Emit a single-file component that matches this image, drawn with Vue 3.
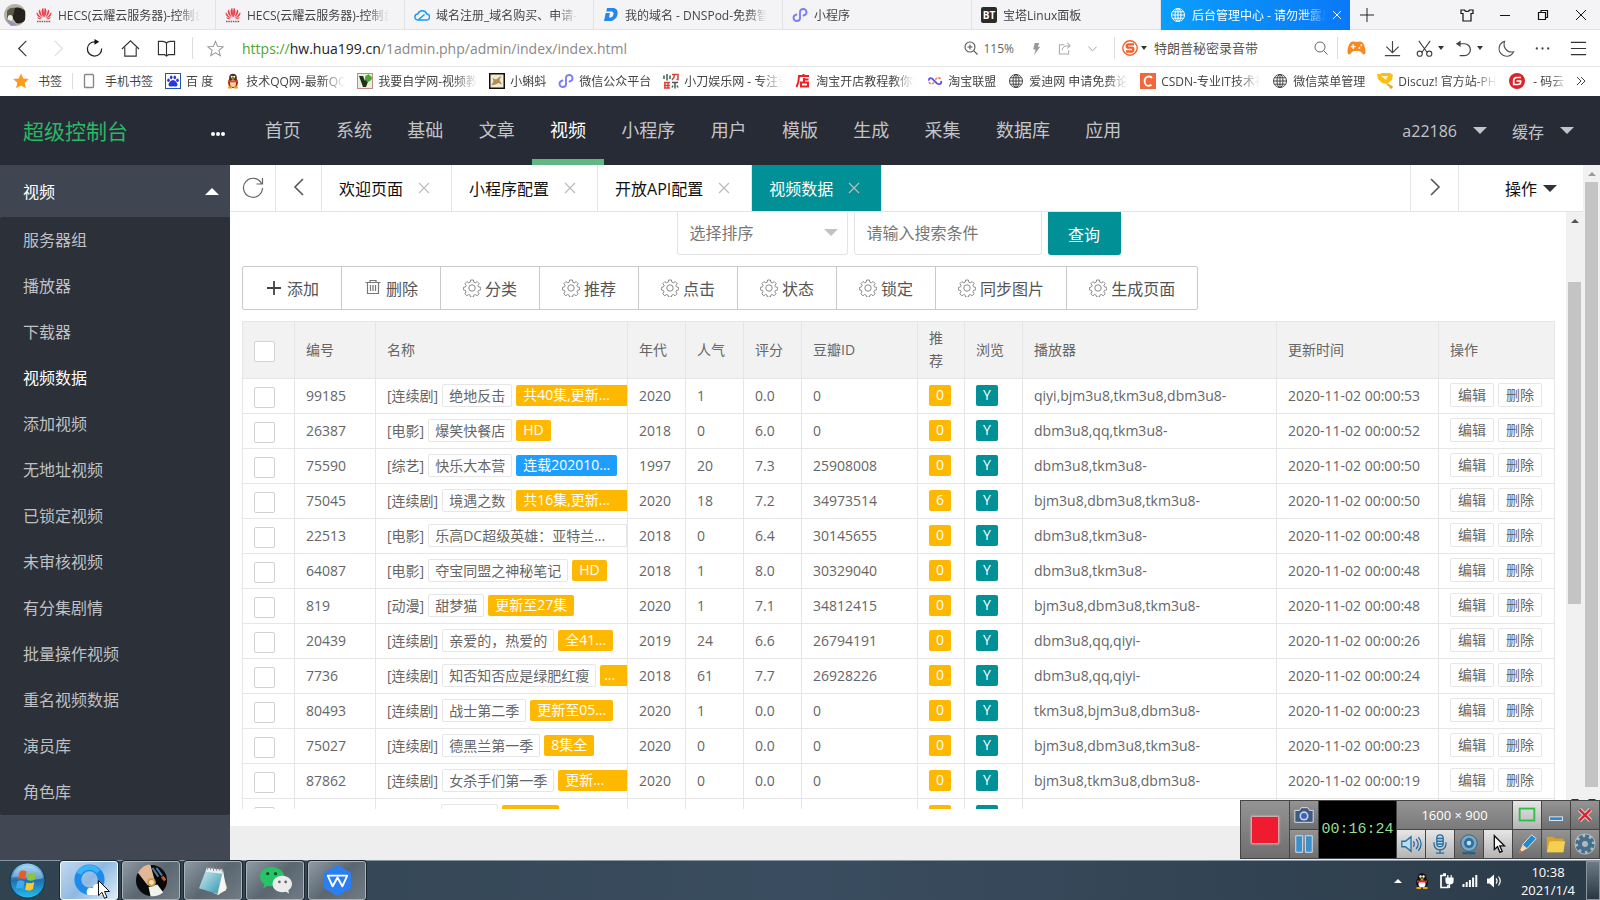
<script setup>
import { ref } from 'vue'

const browserTabs = [
  { icon: 'huawei', title: 'HECS(云耀云服务器)-控制台' },
  { icon: 'huawei', title: 'HECS(云耀云服务器)-控制台' },
  { icon: 'cloud', title: '域名注册_域名购买、申请-腾讯' },
  { icon: 'dnspod', title: '我的域名 - DNSPod-免费智能' },
  { icon: 'mini', title: '小程序' },
  { icon: 'bt', title: '宝塔Linux面板' },
  { icon: 'globe', title: '后台管理中心 - 请勿泄露后', active: true }
]

const bookmarks = [
  { icon: 'baidu', title: '百 度' },
  { icon: 'penguin', title: '技术QQ网-最新QQ技' },
  { icon: 'vgreen', title: '我要自学网-视频教程' },
  { icon: 'ant', title: '小蝌蚪' },
  { icon: 'mini', title: '微信公众平台' },
  { icon: 'knife', title: '小刀娱乐网 - 专注资' },
  { icon: 'shop', title: '淘宝开店教程教你如' },
  { icon: 'union', title: '淘宝联盟' },
  { icon: 'globe', title: '爱迪网 申请免费论坛' },
  { icon: 'csdn', title: 'CSDN-专业IT技术社' },
  { icon: 'globe', title: '微信菜单管理' },
  { icon: 'cup', title: 'Discuz! 官方站-PHP' },
  { icon: 'gitee', title: ' - 码云', short: true }
]

const navs = ['首页', '系统', '基础', '文章', '视频', '小程序', '用户', '模版', '生成', '采集', '数据库', '应用']
const sideItems = ['服务器组', '播放器', '下载器', '视频数据', '添加视频', '无地址视频', '已锁定视频', '未审核视频', '有分集剧情', '批量操作视频', '重名视频数据', '演员库', '角色库']
const pageTabs = ['欢迎页面', '小程序配置', '开放API配置', '视频数据']
const tools = [
  { icon: 'plus', label: '添加' },
  { icon: 'trash', label: '删除' },
  { icon: 'gear', label: '分类' },
  { icon: 'gear', label: '推荐' },
  { icon: 'gear', label: '点击' },
  { icon: 'gear', label: '状态' },
  { icon: 'gear', label: '锁定' },
  { icon: 'gear', label: '同步图片' },
  { icon: 'gear', label: '生成页面' }
]
const columns = [
  { name: '编号', cls: 'c-id' },
  { name: '名称', cls: 'c-name' },
  { name: '年代', cls: 'c-num' },
  { name: '人气', cls: 'c-num' },
  { name: '评分', cls: 'c-num' },
  { name: '豆瓣ID', cls: 'c-act' },
  { name: '推荐', cls: 'c-rec' },
  { name: '浏览', cls: 'c-num' },
  { name: '播放器', cls: 'c-player' },
  { name: '更新时间', cls: 'c-time' },
  { name: '操作', cls: 'c-act' }
]
const rows = [
  { id: '99185', type: '连续剧', name: '绝地反击', note: '共40集,更新...', fill: true, year: '2020', hits: '1', score: '0.0', douban: '0', level: '0', player: 'qiyi,bjm3u8,tkm3u8,dbm3u8-', time: '2020-11-02 00:00:53' },
  { id: '26387', type: '电影', name: '爆笑快餐店', note: 'HD', year: '2018', hits: '0', score: '6.0', douban: '0', level: '0', player: 'dbm3u8,qq,tkm3u8-', time: '2020-11-02 00:00:52' },
  { id: '75590', type: '综艺', name: '快乐大本营', note: '连载202010...', blue: true, year: '1997', hits: '20', score: '7.3', douban: '25908008', level: '0', player: 'dbm3u8,tkm3u8-', time: '2020-11-02 00:00:50' },
  { id: '75045', type: '连续剧', name: '境遇之数', note: '共16集,更新...', fill: true, year: '2020', hits: '18', score: '7.2', douban: '34973514', level: '6', player: 'bjm3u8,dbm3u8,tkm3u8-', time: '2020-11-02 00:00:50' },
  { id: '22513', type: '电影', name: '乐高DC超级英雄：亚特兰...', year: '2018', hits: '0', score: '6.4', douban: '30145655', level: '0', player: 'dbm3u8,tkm3u8-', time: '2020-11-02 00:00:48' },
  { id: '64087', type: '电影', name: '夺宝同盟之神秘笔记', note: 'HD', year: '2018', hits: '1', score: '8.0', douban: '30329040', level: '0', player: 'dbm3u8,tkm3u8-', time: '2020-11-02 00:00:48' },
  { id: '819', type: '动漫', name: '甜梦猫', note: '更新至27集', year: '2020', hits: '1', score: '7.1', douban: '34812415', level: '0', player: 'bjm3u8,dbm3u8,tkm3u8-', time: '2020-11-02 00:00:48' },
  { id: '20439', type: '连续剧', name: '亲爱的，热爱的', note: '全41...', year: '2019', hits: '24', score: '6.6', douban: '26794191', level: '0', player: 'dbm3u8,qq,qiyi-', time: '2020-11-02 00:00:26' },
  { id: '7736', type: '连续剧', name: '知否知否应是绿肥红瘦', note: '...', fill: true, tight: true, year: '2018', hits: '61', score: '7.7', douban: '26928226', level: '0', player: 'dbm3u8,qq,qiyi-', time: '2020-11-02 00:00:24' },
  { id: '80493', type: '连续剧', name: '战士第二季', note: '更新至05...', year: '2020', hits: '1', score: '0.0', douban: '0', level: '0', player: 'tkm3u8,bjm3u8,dbm3u8-', time: '2020-11-02 00:00:23' },
  { id: '75027', type: '连续剧', name: '德黑兰第一季', note: '8集全', year: '2020', hits: '0', score: '0.0', douban: '0', level: '0', player: 'bjm3u8,dbm3u8,tkm3u8-', time: '2020-11-02 00:00:23' },
  { id: '87862', type: '连续剧', name: '女杀手们第一季', note: '更新...', fill: true, year: '2020', hits: '0', score: '0.0', douban: '0', level: '0', player: 'bjm3u8,tkm3u8,dbm3u8-', time: '2020-11-02 00:00:19' }
]
const tasks = ['qqbrowser', 'photo', 'notepad', 'wechat', 'wps']

const checkedAll = ref(false)
const checked = ref([])
</script>

<template>
  <div class="screen">
    <svg class="sprite" aria-hidden="true">
      <defs>
        <linearGradient id="gTask" x1="0" y1="0" x2="0" y2="1"><stop offset="0" stop-color="#9ad4f5" /><stop offset=".5" stop-color="#1d6fae" /><stop offset="1" stop-color="#26c0f0" /></linearGradient>
        <linearGradient id="gNote" x1="0" y1="0" x2="1" y2="1"><stop offset="0" stop-color="#d8f1f6" /><stop offset="1" stop-color="#2f93ae" /></linearGradient>
      </defs>
      <symbol id="huawei" viewBox="0 0 16 16">
        <g fill="#e8404a"><path d="M7.7 10.6C5.600 7.500 4.800 4 6.300 1.400L7.300 1C8 4 8.100 7.500 7.700 10.600zM8.300 10.600C10.400 7.500 11.200 4 9.700 1.400L8.700 1C8 4 7.900 7.500 8.300 10.600z" /><path d="M7 10.800C4.200 9 2.200 6.300 2.800 3.600L4 2.500C4.600 5.500 5.600 8.500 7 10.800zM9 10.800C11.800 9 13.800 6.300 13.200 3.600L12 2.500C11.400 5.500 10.400 8.500 9 10.800z" /><path d="M6.500 11.300C3.500 11 .8 9 .5 6.300L.9 5.300C2.500 7.800 4.300 9.900 6.500 11.300zM9.500 11.300C12.500 11 15.200 9 15.500 6.300L15.100 5.300C13.500 7.800 11.700 9.900 9.500 11.300zM5.900 12C3.800 12.800 1.900 12 1.200 10zM10.100 12C12.200 12.800 14.100 12 14.800 10z" /></g>
        <path d="M1 14.500h14" stroke="#8a5a5c" stroke-width="1.500" stroke-dasharray="1.500 .8" />
      </symbol>
      <symbol id="cloud" viewBox="0 0 16 16"><path d="M4 13h8.500a3 3 0 0 0 .3-6A4.800 4.800 0 0 0 3.800 7 3 3 0 0 0 4 13L10.500 7.500" fill="none" stroke="#1b9cf0" stroke-width="1.500" /></symbol>
      <symbol id="dnspod" viewBox="0 0 16 16"><path d="M4 1h5.500c4 0 5.800 2.500 5 6.500S10.500 14 7 14H1l1.700-8H7L6 10.500h1.200c1.800 0 2.800-1 3.200-3s-.3-3-2-3H3.300z" fill="#2487ee" /></symbol>
      <symbol id="mini" viewBox="0 0 16 16"><path d="M4.500 7.500C2.600 8 1.500 9.200 1.500 10.800c0 1.700 1.400 3.200 3.200 3.200C6.600 14 8 12.800 8 11V5c0-1.800 1.400-3 3.300-3 1.800 0 3.200 1.500 3.200 3.200 0 1.600-1.100 2.800-3 3.300" fill="none" stroke="#7b7ff0" stroke-width="1.900" stroke-linecap="round" /></symbol>
      <symbol id="globe" viewBox="0 0 16 16"><g fill="none" stroke="currentColor"><circle cx="8" cy="8" r="6.500" /><ellipse cx="8" cy="8" rx="3" ry="6.500" /><path d="M8 1.500v13M1.500 8h13M2.500 4.800h11M2.500 11.200h11" /></g></symbol>
      <symbol id="baidu" viewBox="0 0 16 16"><rect x=".5" y=".5" width="15" height="15" fill="#fff" stroke="#1d5aa8" /><g fill="#2a38d8"><ellipse cx="6.200" cy="4.300" rx="1.300" ry="1.900" /><ellipse cx="9.800" cy="4.300" rx="1.300" ry="1.900" /><ellipse cx="3.500" cy="7.300" rx="1.300" ry="1.700" /><ellipse cx="12.500" cy="7.300" rx="1.300" ry="1.700" /><path d="M8 7c2 0 4.500 3 4.500 4.800S10.500 14 8 13.200C5.500 14 3.500 13.600 3.500 11.800S6 7 8 7z" /></g></symbol>
      <symbol id="penguin" viewBox="0 0 16 16"><ellipse cx="8" cy="9.500" rx="5" ry="5.500" fill="#a33018" /><circle cx="8" cy="4.500" r="3.800" fill="#473027" /><ellipse cx="8" cy="10.500" rx="3" ry="3.600" fill="#f4d5a8" /><path d="M4 7.500h8v1.800H4z" fill="#e8421c" /><path d="M6 5.500h4L8 7z" fill="#f7a61b" /><circle cx="6.800" cy="3.800" r="1" fill="#fff" /><circle cx="9.200" cy="3.800" r="1" fill="#fff" /><path d="M3 14.500h4M9 14.500h4" stroke="#f2a018" stroke-width="2" /></symbol>
      <symbol id="vgreen" viewBox="0 0 16 16"><rect x=".5" y=".5" width="15" height="15" fill="#e9efdf" stroke="#c28a86" /><path d="M2 3h4l2 5 1-3 3 1-3 8H6z" fill="#1f2f1c" /><path d="M8 5c0-3 3-3 4-4 0 2 3 2 3 4s-3 4-5 4z" fill="#4ea72d" /></symbol>
      <symbol id="ant" viewBox="0 0 16 16"><rect x=".75" y=".75" width="14.500" height="14.500" fill="#f3ead4" stroke="#111" stroke-width="1.500" /><path d="M2.500 12.500l2-4.500-1-3 3.500 1.500 5.500-4-2 4.500 2.500 4.500-3.500-1.500-3 1.500z" fill="#b08f52" /></symbol>
      <symbol id="knife" viewBox="0 0 16 16"><path d="M1 2.500v3.500M4 1v6.500M7 2.500v3.500M9 9.500h6M12 9.500v6M10 12.500l-1 2M14 12.500l1 2" stroke="#3d5f52" stroke-width="1.500" fill="none" /><path d="M9 1.500h6v5h-1.500M11.500 1.500c0 3-1 4-2.500 5.500M1 9.500h6M2 9v6.500M5 9v6.500M1 12.500h6M1 15h6" stroke="#d94437" stroke-width="1.500" fill="none" /></symbol>
      <symbol id="shop" viewBox="0 0 16 16"><path d="M3 3h11M8.500 1v2M4 3c0 5-1 8-2.500 11M9 5v4M9 6.500h4.500M6 9.500h7v4H6z" stroke="#e22" stroke-width="2" fill="none" /></symbol>
      <symbol id="union" viewBox="0 0 16 16"><path d="M2.500 7.500C1 6 3 4.500 5 5.500l5 5c2.500 1.500 5 0 4-2.500" fill="none" stroke="#6253e8" stroke-width="1.800" /><path d="M13.500 6C12 4 9.500 5 8 7M2 9c1 2.500 3.500 2 5 .5" fill="none" stroke="#f07a5a" stroke-width="1.600" stroke-dasharray="2.500 1" /></symbol>
      <symbol id="csdn" viewBox="0 0 16 16"><rect width="16" height="16" fill="#f0683c" /><path d="M12 5C11 3.500 9.500 3.200 8 3.600 5.800 4.200 4.400 6.500 4.700 9s2.300 4 4.300 3.800c1-.1 1.900-.5 2.500-1" fill="none" stroke="#fff" stroke-width="1.900" /></symbol>
      <symbol id="cup" viewBox="0 0 16 16"><path d="M0 1h3l2-1h8l3 2-1 5-5 4-5-1-4-4z" fill="#fbbd17" /><path d="M4 3h7l-2 4z" fill="#fff3c0" /><path d="M10 11l3 2" stroke="#f0a814" stroke-width="2" /><circle cx="14" cy="14" r="1.800" fill="#f0a814" /></symbol>
      <symbol id="gitee" viewBox="0 0 16 16"><circle cx="8" cy="8" r="8" fill="#d8242a" /><path d="M12 4.500H7.500A2.800 2.800 0 0 0 4.700 7.300v4.200h4.500a2.400 2.400 0 0 0 2.400-2.400V8H7.500" fill="none" stroke="#fff" stroke-width="1.700" /></symbol>
      <symbol id="plus" viewBox="0 0 18 18"><path d="M9 2v14M2 9h14" stroke="#444" stroke-width="1.800" /></symbol>
      <symbol id="trash" viewBox="0 0 18 18"><g fill="none" stroke="#777"><path d="M1.500 3.500h15M6 3V1.500h6V3M3.500 4v10.500h11V4M6.500 6v6M9 6v6M11.500 6v6" stroke-width="1.200" /></g></symbol>
      <symbol id="gear" viewBox="0 0 18 18"><g fill="none" stroke="#8a8a8a"><circle cx="9" cy="9" r="3.200" /><path d="M7.600 1h2.800l.4 2.200 1.500.6 1.900-1.200 2 2-1.300 1.800.6 1.500 2.200.5v2.500l-2.200.5-.6 1.500 1.200 1.900-2 2-1.800-1.300-1.500.7-.4 1.900H7.600l-.5-1.900-1.500-.7-1.800 1.300-2-2 1.200-1.900-.6-1.500L.4 10.900V8.400l2.100-.5.6-1.500L1.900 4.600l2-2 1.800 1.200 1.500-.6z" /></g></symbol>
      <symbol id="qqbrowser" viewBox="0 0 34 34"><circle cx="17" cy="16" r="12" fill="none" stroke="#1d8bea" stroke-width="7" /><path d="M6 10a12 12 0 0 1 20-2" fill="none" stroke="#39b4f8" stroke-width="5" /><path d="M15 32c-3-6 2-9 5-7 2-7 10-5 10 0 5 1 4 7 0 7z" fill="#fff" /></symbol>
      <symbol id="photo" viewBox="0 0 34 34"><circle cx="17" cy="17" r="16" fill="#08090b" /><path d="M3 9C7 2 13 0 16 1l4 15-7 6z" fill="#e3b796" /><path d="M14 24l9-3 6 8c-3 3-9 5-13 4z" fill="#f2f2ee" /><circle cx="17" cy="19" r="4.500" fill="#c99b4a" /><circle cx="17" cy="19" r="2.500" fill="#f1e2b8" /><path d="M18 4l6 9M22 4l6 8" stroke="#4b7c9c" stroke-width="2" /><path d="M28 13l3 4" stroke="#d2572d" stroke-width="3" /></symbol>
      <symbol id="notepad" viewBox="0 0 34 34"><path d="M25 5l6 20-9 7-5-2z" fill="#eae6cf" /><path d="M10 4l17 2-6 25L2 25z" fill="url(#gNote)" /><path d="M10 4l17 2-1 4L9 8z" fill="#e8eef0" /><path d="M27 7l3 20-8 4z" fill="#f7f7f2" /><path d="M11 2v4M14 2v4M17 3v4M20 3v4M23 3v4M26 4v4" stroke="#888" /></symbol>
      <symbol id="wechat" viewBox="0 0 34 34"><path d="M13 3C6 3 1 7.500 1 13c0 3.500 2 6 4.500 7.800L4.500 25l4.500-2.500c8 2 17-1.500 17-9.500C26 7.500 20 3 13 3z" fill="#27c467" /><circle cx="9" cy="10" r="1.700" fill="#15502e" /><circle cx="17" cy="10" r="1.700" fill="#15502e" /><path d="M24 12c-6 0-10 4-10 8.500S18 29 24 29c1.300 0 2.500-.2 3.600-.5L31 30.500l-.8-3.500c2.400-1.600 3.800-3.800 3.800-6.500C34 16 30 12 24 12z" fill="#ececec" /><circle cx="21" cy="18.500" r="1.400" fill="#666" /><circle cx="27.500" cy="18.500" r="1.400" fill="#666" /></symbol>
      <symbol id="wps" viewBox="0 0 34 34"><path d="M17 1l14 8v16l-14 8-14-8V9z" fill="#2b7ff0" /><path d="M7 12h20l-5 11-5-9-5 9z" fill="none" stroke="#fff" stroke-width="2" stroke-linejoin="round" /></symbol>
    </svg>

    <header class="chrome">
      <div class="tabstrip">
        <svg class="avatar" viewBox="0 0 22 22" role="img" aria-label="头像"><circle cx="11" cy="11" r="11" fill="#b5b3a6" /><path d="M9 5c4-3 9-1 12 2v9c-2 3-6 4-9 3l-4-6z" fill="#25221e" /><path d="M3 7c2-3 5-4 8-3l-2 8-6 2z" fill="#5d5b4e" /><path d="M4 12c2-2 4-1 5 1l-1 4-4-1z" fill="#f0eee8" /><path d="M1 14l6 3 6 4-6 1z" fill="#9990b3" /></svg>
        <a v-for="(t, i) in browserTabs" :key="i" href="#" class="btab" :class="{ active: t.active }">
          <span v-if="t.icon === 'bt'" class="btlogo">BT</span>
          <svg v-else class="i16"><use :href="'#' + t.icon" /></svg>
          <span class="fade">{{ t.title }}</span>
          <svg v-if="t.active" class="i10" viewBox="0 0 10 10"><path d="M1 1l8 8M9 1L1 9" stroke="#fff" /></svg>
        </a>
        <button class="newtab" aria-label="新标签页"><svg viewBox="0 0 14 14"><path d="M7 0v14M0 7h14" stroke="#222" /></svg></button>
        <span class="grow"></span>
        <button class="win" aria-label="皮肤"><svg viewBox="0 0 14 14"><path d="M1 2h3.500c.5 2 4.500 2 5 0H13v3.500h-2V13H3V5.500H1z" fill="none" stroke="#111" stroke-width="1.200" /></svg></button>
        <button class="win" aria-label="最小化"><svg viewBox="0 0 14 14"><path d="M2 7.500h10" stroke="#111" /></svg></button>
        <button class="win" aria-label="还原"><svg viewBox="0 0 14 14"><path d="M2.500 4.500h7v7h-7zM5 4V2.500h6.500v7H10" fill="none" stroke="#111" stroke-width="1.200" /></svg></button>
        <button class="win" aria-label="关闭"><svg viewBox="0 0 14 14"><path d="M2 2l10 10M12 2L2 12" stroke="#111" /></svg></button>
      </div>

      <div class="navbar">
        <button class="nb" aria-label="后退"><svg viewBox="0 0 20 20"><path d="M14 2L6 10l8 8" fill="none" stroke="#333" stroke-width="1.200" /></svg></button>
        <button class="nb" aria-label="前进"><svg viewBox="0 0 20 20"><path d="M6 2l8 8-8 8" fill="none" stroke="#ddd" stroke-width="1.200" /></svg></button>
        <button class="nb" aria-label="刷新"><svg viewBox="0 0 20 20"><path d="M11 3A7.500 7.500 0 1 0 17.500 10" fill="none" stroke="#222" stroke-width="1.300" /><path d="M10 0l5 3-5 3z" fill="#111" /></svg></button>
        <button class="nb" aria-label="主页"><svg viewBox="0 0 20 20"><path d="M1 10.500L10 2l9 8.500M4 9v9h12V9" fill="none" stroke="#333" stroke-width="1.200" /></svg></button>
        <button class="nb" aria-label="阅读"><svg viewBox="0 0 20 20"><path d="M10 4.500C9 3 8 2.500 6 2.500H1.500v14H8l2 1.500 2-1.500h6.500v-14H14c-2 0-3 .5-4 2V17" fill="none" stroke="#333" stroke-width="1.200" /></svg></button>
        <i class="vsep"></i>
        <button class="nb star" aria-label="收藏"><svg viewBox="0 0 20 20"><path d="M10 2.500l2.200 5.200 5.800.5-4.400 3.700 1.400 5.600-5-3-5 3 1.400-5.600L2 8.200l5.800-.5z" fill="none" stroke="#999" stroke-width="1.100" /></svg></button>
        <div class="url" role="textbox" aria-label="网址" contenteditable="true"><span class="scheme">https://</span><span class="host">hw.hua199.cn</span>/1admin.php/admin/index/index.html</div>
        <div class="pageinfo">
          <svg class="i14" viewBox="0 0 14 14"><g fill="none" stroke="#555" stroke-width="1.100"><circle cx="6" cy="6" r="5" /><path d="M3.500 6h5M6 3.500v5M9.700 9.700L13.500 13.500" /></g></svg>
          <span>115%</span>
        </div>
        <button class="sm" aria-label="极速"><svg viewBox="0 0 14 14"><path d="M5 1h5L8.500 5H11L4.500 14 6 8H3.500z" fill="#999" /></svg></button>
        <button class="sm" aria-label="分享"><svg viewBox="0 0 14 14"><path d="M7 3H1.500v10h10V9M4.500 9c0-4 3-5 7.500-5M10 1l3 3-3 3" fill="none" stroke="#aaa" stroke-width="1.100" /></svg></button>
        <button class="sm" aria-label="更多"><svg viewBox="0 0 14 14"><path d="M2.500 5L7 9.500 11.500 5" fill="none" stroke="#999" /></svg></button>
        <i class="vsep"></i>
        <label class="search">
          <svg class="i16" viewBox="0 0 16 16"><circle cx="8" cy="8" r="7.200" fill="none" stroke="#f0602c" stroke-width="1.400" /><path d="M12 4.300H6.300c-2 0-2 3.300 0 3.300h3.400c2.200 0 2.200 3.900 0 3.900H4" fill="none" stroke="#f0602c" stroke-width="2.300" /></svg>
          <i class="tri"></i>
          <input type="text" aria-label="搜索" placeholder="特朗普秘密录音带" />
          <svg class="i14" viewBox="0 0 14 14"><circle cx="6" cy="6" r="5" fill="none" stroke="#666" /><path d="M9.500 9.500L13.500 13.500" stroke="#666" /></svg>
        </label>
        <i class="vsep"></i>
        <button class="nb" aria-label="游戏"><svg viewBox="0 0 20 20"><path d="M5 3c2-1 3 0 5 0s3-1 5 0c3 1 4.500 7 4.500 11 0 3-3 3-4.500 0-1-2-9-2-10 0C3.500 17 .5 17 .5 14 .5 10 2 4 5 3z" fill="#f58a24" /><path d="M4 8h5M6.500 5.500v5" stroke="#fff" stroke-width="1.400" /><circle cx="13" cy="9.500" r="1" fill="#fff" /><circle cx="15" cy="6.500" r="1" fill="#fff" /></svg></button>
        <button class="nb" aria-label="下载"><svg viewBox="0 0 20 20"><path d="M10 2v12M3.500 8L10 14.300 16.500 8M2 17.500h16" fill="none" stroke="#444" stroke-width="1.200" /></svg></button>
        <button class="nb pair" aria-label="截图"><svg viewBox="0 0 20 20"><g fill="none" stroke="#444" stroke-width="1.200"><path d="M4 2l9 12.500M16 2L7 14.500" /><circle cx="5" cy="15.500" r="2.700" /><circle cx="15" cy="15.500" r="2.700" /></g></svg><i class="tri"></i></button>
        <button class="nb pair" aria-label="恢复"><svg viewBox="0 0 20 20"><path d="M3 5h8a6 6 0 0 1 0 12.500H6" fill="none" stroke="#444" stroke-width="1.300" /><path d="M7 1.500V8.500L2 5z" fill="#444" /></svg><i class="tri"></i></button>
        <button class="nb" aria-label="夜间"><svg viewBox="0 0 20 20"><path d="M8 2.500C6 8 10 15 17.500 13.500A8 8 0 1 1 8 2.500z" fill="none" stroke="#555" stroke-width="1.200" /></svg></button>
        <button class="nb" aria-label="更多工具"><svg viewBox="0 0 20 20"><g fill="#444"><circle cx="4" cy="10" r="1.200" /><circle cx="10" cy="10" r="1.200" /><circle cx="16" cy="10" r="1.200" /></g></svg></button>
        <button class="nb" aria-label="菜单"><svg viewBox="0 0 20 20"><path d="M2 3.500h16M2 10h16M2 16.500h16" stroke="#333" stroke-width="1.200" /></svg></button>
      </div>

      <nav class="bookmarks" aria-label="书签">
        <a href="#" class="fav"><svg class="i16" viewBox="0 0 16 16"><path d="M8 .5l2.300 5 5.500.6-4.100 3.700 1.200 5.500L8 12.500l-4.900 2.800 1.200-5.500L.2 6.100l5.500-.6z" fill="#ff9a1f" /></svg>书签</a>
        <i class="vsep"></i>
        <a href="#" class="mobile"><svg class="i16" viewBox="0 0 16 16"><rect x="3.500" y="1.500" width="9" height="13" rx="1" fill="none" stroke="#888" stroke-width="1.400" /></svg>手机书签</a>
        <a v-for="(b, i) in bookmarks" :key="i" href="#"><svg class="i16"><use :href="'#' + b.icon" /></svg><span class="fade" :class="{ short: b.short }">{{ b.title }}</span></a>
        <button class="more" aria-label="更多书签"><svg viewBox="0 0 10 10"><path d="M1 1l4 4-4 4M5 1l4 4-4 4" fill="none" stroke="#444" /></svg></button>
      </nav>
    </header>

    <header class="top">
      <div class="brand"><a href="#">超级控制台</a><button aria-label="折叠菜单"><i></i><i></i><i></i></button></div>
      <nav><a v-for="n in navs" :key="n" href="#" :class="{ on: n === '视频' }">{{ n }}</a></nav>
      <div class="user">
        <button>a22186<i class="arrow"></i></button>
        <button>缓存<i class="arrow"></i></button>
      </div>
    </header>

    <div class="body">
      <aside>
        <button class="group">视频<i class="arrow up"></i></button>
        <ul><li v-for="s in sideItems" :key="s"><a href="#" :class="{ on: s === '视频数据' }">{{ s }}</a></li></ul>
      </aside>

      <main>
        <div class="frame">
          <div class="pane">
            <div class="ptabs">
              <button class="sq" aria-label="刷新页面"><svg viewBox="0 0 22 22"><path d="M19.500 7.500A9.500 9.500 0 1 0 20.500 12M20.500 2v6h-6" fill="none" stroke="#666" stroke-width="1.200" /></svg></button>
              <button class="sq" aria-label="向左"><svg viewBox="0 0 22 22"><path d="M15 3L7 11l8 8" fill="none" stroke="#555" stroke-width="1.600" /></svg></button>
              <a v-for="p in pageTabs" :key="p" href="#" :class="{ on: p === '视频数据' }">{{ p }}<svg class="x" viewBox="0 0 12 12"><path d="M1 1l10 10M11 1L1 11" stroke="currentColor" stroke-width="1.200" /></svg></a>
              <span class="grow"></span>
              <button class="sq right" aria-label="向右"><svg viewBox="0 0 22 22"><path d="M7 3l8 8-8 8" fill="none" stroke="#555" stroke-width="1.600" /></svg></button>
              <button class="ops">操作<i class="arrow"></i></button>
            </div>

            <div class="inner">
              <div class="content">
                <form class="query" @submit.prevent>
                  <span class="sel"><select aria-label="选择排序"><option>选择排序</option></select><i class="arrow"></i></span>
                  <input type="text" aria-label="搜索条件" placeholder="请输入搜索条件" />
                  <button>查询</button>
                </form>
                <div class="tools"><button v-for="t in tools" :key="t.label"><svg><use :href="'#' + t.icon" /></svg>{{ t.label }}</button></div>
                <table>
                  <thead>
                    <tr>
                      <th class="c-check"><input v-model="checkedAll" type="checkbox" aria-label="全选" /></th>
                      <th v-for="c in columns" :key="c.name" :class="c.cls">{{ c.name }}</th>
                    </tr>
                  </thead>
                  <tbody>
                    <tr v-for="r in rows" :key="r.id">
                      <td><input v-model="checked" type="checkbox" :value="r.id" :aria-label="'选择 ' + r.id" /></td>
                      <td>{{ r.id }}</td>
                      <td class="name"><div><span>[{{ r.type }}]</span><a href="#" class="line" :class="{ fill: !r.note }">{{ r.name }}</a><span v-if="r.note" class="badge" :class="{ fill: r.fill, blue: r.blue, tight: r.tight }">{{ r.note }}</span></div></td>
                      <td>{{ r.year }}</td>
                      <td>{{ r.hits }}</td>
                      <td>{{ r.score }}</td>
                      <td>{{ r.douban }}</td>
                      <td><button class="badge one">{{ r.level }}</button></td>
                      <td><a href="#" class="badge one teal">Y</a></td>
                      <td>{{ r.player }}</td>
                      <td>{{ r.time }}</td>
                      <td><div class="acts"><button>编辑</button><button>删除</button></div></td>
                    </tr>
                    <tr aria-hidden="true">
                      <td><input type="checkbox" tabindex="-1" /></td>
                      <td></td>
                      <td class="name"><div><span class="ph"></span><span class="line ph2"></span><span class="badge ph2"></span></div></td>
                      <td></td><td></td><td></td><td></td>
                      <td><span class="badge one"></span></td>
                      <td><span class="badge one teal"></span></td>
                      <td></td><td></td><td></td>
                    </tr>
                  </tbody>
                </table>
              </div>
              <div class="sbar in"><i class="sa up"></i><i class="thumb"></i><i class="sa down"></i></div>
            </div>
          </div>
          <div class="sbar out"><i class="sa up"></i><i class="thumb"></i><i class="sa down"></i></div>
        </div>
        <div class="gap"></div>
        <footer></footer>
      </main>
    </div>

    <div class="taskbar">
      <button class="orb" aria-label="开始"><svg viewBox="0 0 38 38"><circle cx="19" cy="19" r="18" fill="url(#gTask)" stroke="#0c3552" /><path d="M3 16A16.500 16.500 0 0 1 35 16C25 22 13 12 3 16z" fill="#fff" opacity=".3" /><path d="M11 10c3-2 5-1 7 0l-1.500 8c-2-1-5-2-7.500-.5z" fill="#ee5a24" /><path d="M20 11c3 1 5 1 8-.5L26.500 18c-3 2-5 1-8 .5z" fill="#8cc63e" /><path d="M8.500 20c3-2 5-1 7.500.3L14.500 28c-2-1.200-4.500-2-7.500-.5z" fill="#3fa9f0" /><path d="M18 21c3 1.200 5 1 8-.5L24.500 28c-3 2-5 1.500-8 .5z" fill="#fdc82f" /></svg></button>
      <button v-for="(t, i) in tasks" :key="t" class="task" :class="{ cur: i === 0 }" :aria-label="t"><svg><use :href="'#' + t" /></svg></button>
      <span class="grow"></span>
      <div class="tray">
        <svg viewBox="0 0 16 16" class="i16"><path d="M4 10l4-4 4 4z" fill="#fff" /></svg>
        <svg viewBox="0 0 16 16" class="i16"><ellipse cx="8" cy="9.500" rx="6" ry="5.500" fill="#111" /><circle cx="8" cy="4.500" r="4.300" fill="#111" /><ellipse cx="8" cy="11" rx="3.500" ry="3.500" fill="#fff" /><path d="M3 7.500h10v2H3z" fill="#e02a22" /><path d="M5.500 5.500h5L8 7.200z" fill="#f7a61b" /><circle cx="6.500" cy="3.500" r="1.200" fill="#fff" /><circle cx="9.500" cy="3.500" r="1.200" fill="#fff" /><path d="M2.500 15h4.500M9 15h4.500" stroke="#f2a018" stroke-width="2" /></svg>
        <svg viewBox="0 0 16 16" class="i16"><path d="M8 2.500H3v12h7V12M5 1h3" fill="none" stroke="#fff" stroke-width="1.700" /><path d="M8 5h7v3c0 2-1.500 3-3.500 3S8 10 8 8zM9.800 2v3M13.200 2v3M11.500 11v4" fill="#fff" stroke="#fff" stroke-width="1.200" /></svg>
        <svg viewBox="0 0 16 16" class="i16"><path d="M1.500 14v-3M4.700 14V9M7.900 14V7M11.100 14V4.500M14.300 14V2" stroke="#fff" stroke-width="2" /></svg>
        <svg viewBox="0 0 16 16" class="i16"><path d="M1 5.500h2.500L8 1.500v13l-4.500-4H1z" fill="#fff" /><path d="M10 5.500c1.300 1.500 1.300 3.500 0 5M12.500 3.500c2.300 3 2.300 6 0 9" fill="none" stroke="#fff" stroke-width="1.200" /></svg>
        <div class="clock"><span>10:38</span><span>2021/1/4</span></div>
        <button class="peek" aria-label="显示桌面"></button>
      </div>
      <svg class="cursor" viewBox="0 0 12 19"><path d="M.5.500v15l3.500-3.200 2.500 6 2.500-1-2.500-5.800h5z" fill="#fff" stroke="#111" /></svg>
    </div>

    <div class="recorder">
      <button class="rec" aria-label="停止录制"><i></i></button>
      <button class="cam" aria-label="截屏"><svg viewBox="0 0 24 24"><path d="M2 7h5l2-3h7l2 3h4v13H2z" fill="#3f5a80" stroke="#dfe6f0" /><circle cx="12" cy="13" r="5" fill="#c4d2ec" /><circle cx="12" cy="13" r="3.200" fill="#3b62b8" /></svg></button>
      <button class="pause" aria-label="暂停"><svg viewBox="0 0 24 24"><path d="M3 3h7.500v18H3zM13.500 3H21v18h-7.500z" fill="#3d8fcc" stroke="#d8e6f2" /></svg></button>
      <output class="timer">00:16:24</output>
      <span class="size">1600 × 900</span>
      <button class="lit" aria-label="区域"><svg viewBox="0 0 24 24"><rect x="4" y="5" width="16" height="13" fill="none" stroke="#2cbf45" stroke-width="2" /></svg></button>
      <button aria-label="最小化录制"><svg viewBox="0 0 24 24"><rect x="5" y="14" width="14" height="4" fill="#2f86c8" stroke="#e5eef6" /></svg></button>
      <button aria-label="关闭录制"><svg viewBox="0 0 24 24"><path d="M6 6l12 12M18 6L6 18" stroke="#fff" stroke-width="5" opacity=".6" /><path d="M6 6l12 12M18 6L6 18" stroke="#e01e28" stroke-width="2.500" /></svg></button>
      <button class="lit" aria-label="声音"><svg viewBox="0 0 24 24"><g fill="none" stroke="#2b6c9e" stroke-width="1.400"><path d="M2 9h4l6-5v16l-6-5H2z" fill="#b8dcf4" /><path d="M14.500 9c1.500 2 1.500 4 0 6M17.500 6.500c3 3.500 3 7.500 0 11M20 4.500c4 5 4 10 0 15" /></g></svg></button>
      <button class="lit" aria-label="麦克风"><svg viewBox="0 0 24 24"><g fill="none" stroke="#2b6c9e" stroke-width="1.400"><rect x="8.500" y="2" width="7" height="13" rx="3.500" fill="#b8dcf4" /><path d="M8.500 6h7M8.500 9h7M8.500 12h7M5.500 10v2a6.500 6.500 0 0 0 13 0v-2M12 18.500V22M7.500 22h9" /></g></svg></button>
      <button aria-label="摄像头"><svg viewBox="0 0 24 24"><circle cx="12" cy="11" r="9" fill="#7fa8c4" stroke="#2f5f80" /><circle cx="12" cy="11" r="5.500" fill="#2d6f9e" /><circle cx="12" cy="11" r="2.500" fill="#bfe0f4" /><path d="M5 22h14" stroke="#2f5f80" stroke-width="2.500" /></svg></button>
      <button class="lit" aria-label="指针"><svg viewBox="0 0 24 24"><path d="M8 3v15l3.500-3 2.500 6 2.500-1-2.500-6H19z" fill="#fff" stroke="#111" stroke-width="1.500" /></svg></button>
      <button aria-label="画笔"><svg viewBox="0 0 24 24"><path d="M7 13L17 2l5 4L12 17z" fill="#2589cc" stroke="#dcecf6" /><path d="M7 13l5 4-9 5z" fill="#f4d8b0" /><path d="M3 22l1.500-3.500 2 2z" fill="#d65030" /></svg></button>
      <button aria-label="文件夹"><svg viewBox="0 0 24 24"><path d="M2 4h7l2 2h9v15H2z" fill="#d9a520" /><path d="M5 9h17l-2 12H2z" fill="#f5cf52" /></svg></button>
      <button aria-label="设置"><svg viewBox="0 0 24 24"><circle cx="12" cy="12" r="11.500" fill="#c6d2da" opacity=".7" /><circle cx="12" cy="12" r="8.500" fill="none" stroke="#456f8c" stroke-width="4" stroke-dasharray="4 2.670" /><circle cx="12" cy="12" r="5.500" fill="none" stroke="#456f8c" stroke-width="4.500" /></svg></button>
    </div>
  </div>
</template>

<style>
html, body { margin: 0; }
</style>

<style scoped>
.screen {
  position: relative;
  display: flex;
  flex-direction: column;
  height: 100vh;
  overflow: hidden;
  font-family: "Open Sans", "Noto Sans CJK SC", sans-serif;
  font-size: 14px;
  color: #666;
  background: #fff;
}
.screen *, .screen *::before { box-sizing: border-box; }
button, input, select { font: inherit; color: inherit; background: none; border: 0; padding: 0; margin: 0; outline: 0; }
a { color: inherit; text-decoration: none; }
ul { list-style: none; margin: 0; padding: 0; }
svg { display: block; flex: none; }
.sprite { position: absolute; width: 0; height: 0; }
.grow { flex: 1; }
.i16 { width: 16px; height: 16px; }
.i14 { width: 14px; height: 14px; }
.i10 { width: 10px; height: 10px; }
.vsep { flex: none; width: 1px; height: 22px; background: #ddd; }
.tri { flex: none; border: 3px solid transparent; border-top: 4px solid #333; border-bottom: 0; }
.arrow { flex: none; border: 7px solid transparent; border-top-color: currentColor; border-bottom: 0; }
.arrow.up { border-top: 0; border-bottom: 7px solid currentColor; }
.fade {
  overflow: hidden;
  white-space: pre;
  -webkit-mask-image: linear-gradient(to right, #000 120px, transparent 142px);
  mask-image: linear-gradient(to right, #000 120px, transparent 142px);
}

/* browser window */
.chrome { flex: none; font-size: 12px; color: #444; }
.tabstrip { display: flex; height: 30px; background: #f4f4f6; border-bottom: 1px solid #e2e2e4; }
.avatar { width: 22px; height: 22px; margin: 4px 1px 0 4px; }
.btab { flex: 0 1 189px; min-width: 0; display: flex; align-items: center; gap: 6px; padding: 0 8px 0 9px; border-right: 1px solid #e2e2e4; }
.btab .fade { flex: 0 1 142px; }
.btab.active { color: #fff; background: linear-gradient(to right, #0a9ffc, #0a78f8); border: 0; height: 30px; }
.btab.active .fade { flex-basis: 134px; -webkit-mask-image: linear-gradient(to right, #000 112px, transparent 134px); mask-image: linear-gradient(to right, #000 112px, transparent 134px); }
.btlogo { flex: none; width: 16px; height: 16px; border-radius: 2px; background: #2b2b2b; color: #fff; font-size: 10px; font-weight: 700; line-height: 16px; text-align: center; }
.newtab { width: 34px; display: grid; place-items: center; }
.newtab svg, .win svg { width: 14px; height: 14px; }
.win { width: 38px; display: grid; place-items: center; }
.navbar { display: flex; align-items: center; height: 37px; padding: 0 4px; border-bottom: 1px solid #e6e6e6; }
.nb { flex: none; width: 36px; height: 30px; display: flex; align-items: center; justify-content: center; }
.nb svg { width: 19px; height: 19px; }
.nb.pair { width: 39px; gap: 4px; }
.nb + .vsep { margin-left: 8px; }
.star { width: 44px; }
.url { flex: 1; min-width: 0; margin-left: 5px; font-size: 14px; color: #888; white-space: nowrap; outline: 0; }
.scheme { color: #4da62d; }
.host { color: #222; }
.pageinfo { display: flex; align-items: center; gap: 5px; margin-right: 8px; color: #666; }
.sm { width: 28px; height: 28px; display: grid; place-items: center; }
.sm svg { width: 13px; height: 13px; }
.sm + .vsep { margin-left: 8px; }
.search { display: flex; align-items: center; width: 222px; padding: 0 9px 0 7px; gap: 3px; }
.search input { flex: 1; min-width: 0; margin-left: 4px; font-size: 13px; }
.search input::placeholder { color: #555; opacity: 1; }
.bookmarks { display: flex; align-items: center; gap: 12px; height: 29px; padding: 0 14px 2px 13px; overflow: hidden; }
.bookmarks a { flex: none; display: flex; align-items: center; gap: 5px; white-space: pre; }
.bookmarks .fav { gap: 9px; margin-right: -2px; }
.bookmarks .mobile { gap: 8px; margin-left: -4px; }
.bookmarks .vsep { height: 16px; }
.bookmarks .fade { max-width: 99px; -webkit-mask-image: linear-gradient(to right, #000 76px, transparent 99px); mask-image: linear-gradient(to right, #000 76px, transparent 99px); }
.bookmarks .fade.short { max-width: 37px; -webkit-mask-image: linear-gradient(to right, #000 20px, transparent 37px); mask-image: linear-gradient(to right, #000 20px, transparent 37px); }
.more { margin-left: auto; width: 10px; flex: none; }
.more svg { width: 10px; height: 10px; }

/* admin header */
.top { flex: none; display: flex; height: 69px; background: #272b35; color: #c3c4c7; }
.brand { flex: none; width: 247px; display: flex; align-items: center; justify-content: space-between; padding: 0 22px 2px 23px; font-size: 21px; color: #2bb765; }
.brand button { display: flex; gap: 1px; padding-top: 8px; }
.brand i { width: 4px; height: 4px; border-radius: 2px; background: #fff; }
.top nav { flex: 0 1 892px; display: flex; }
.top nav a { flex: 1 1 auto; padding: 0 17px; text-align: center; white-space: nowrap; font-size: 18px; line-height: 68px; }
.top nav a.on { color: #fff; box-shadow: inset 0 -6px #5fb880; }
.user { margin-left: auto; display: flex; align-items: center; gap: 25px; padding-right: 26px; font-size: 16px; }
.user button { display: flex; align-items: center; gap: 16px; }

/* sidebar */
.body { flex: 1; min-height: 0; display: flex; }
aside { flex: none; width: 230px; background: #414753; font-size: 16px; color: #bfc0c3; }
.group { width: 100%; height: 52px; display: flex; align-items: center; justify-content: space-between; padding: 0 11px 0 23px; color: #fff; background: #3f4652; }
aside ul { background: #2c3039; border-radius: 2px; }
aside li a { display: block; padding-left: 23px; line-height: 46px; }
aside li a.on { color: #fff; }

/* main area */
main { flex: 1; min-width: 0; display: flex; flex-direction: column; }
.frame { flex: 1; min-height: 0; display: flex; }
.pane { flex: 1; min-width: 0; display: flex; flex-direction: column; }
.gap { flex: none; height: 17px; background: #fff; }
footer { flex: none; height: 34px; background: #eee; }
.ptabs { flex: none; display: flex; height: 47px; border-bottom: 1px solid #e4e4e4; font-size: 16px; color: #111; }
.sq { flex: none; width: 46px; display: grid; place-items: center; border-right: 1px solid #e6e6e6; }
.sq svg { width: 22px; height: 22px; margin-bottom: 2px; }
.sq.right { width: 49px; border-left: 1px solid #e6e6e6; }
.ptabs a { display: flex; align-items: center; gap: 15px; padding: 0 21px 0 17px; border-right: 1px solid #e6e6e6; white-space: nowrap; }
.ptabs a.on { background: #009095; color: #fff; }
.x { width: 12px; height: 12px; color: #bbb; }
.ops { width: 124px; display: flex; align-items: center; gap: 6px; padding-left: 46px; }
.ops .arrow { border-top-color: #333; }
.inner { flex: 1; min-height: 0; display: flex; }
.content { flex: 1; min-width: 0; overflow: hidden; padding: 0 11px 0 12px; }
.query { display: flex; justify-content: center; gap: 6px; font-size: 16px; margin-bottom: 11px; color: #777; }
.query input, .sel select { height: 43px; border: 1px solid #e4e4e4; border-top: 0; border-radius: 0 0 3px 3px; padding: 0 12px; appearance: none; }
.query input { width: 188px; }
.query input::placeholder { color: #777; opacity: 1; }
.sel { position: relative; width: 171px; }
.sel select { width: 100%; }
.sel .arrow { position: absolute; right: 10px; top: 17px; color: #c2c2c2; pointer-events: none; }
.query button { width: 73px; height: 43px; color: #fff; background: #009095; border-radius: 0 0 3px 3px; }
.tools { display: flex; width: max-content; font-size: 16px; color: #555; border: 1px solid #c9c9c9; border-radius: 2px; margin-bottom: 11px; }
.tools button { display: flex; align-items: center; gap: 4px; height: 42px; padding: 0 22px; white-space: nowrap; }
.tools button + button { border-left: 1px solid #c9c9c9; }
.tools svg { width: 18px; height: 18px; }

table { width: 100%; table-layout: fixed; border-collapse: collapse; line-height: 23px; }
th { height: 57px; padding: 0 11px 2px; text-align: left; font-weight: 400; background: #f2f2f2; border: 1px solid #e6e6e6; }
td { height: 35px; padding: 0 0 2px 11px; border: 1px solid #e6e6e6; white-space: nowrap; overflow: hidden; }
.c-check { width: 52px; }
.c-id { width: 81px; }
.c-name { width: 252px; }
.c-num { width: 58px; }
.c-act { width: 116px; }
.c-rec { width: 47px; }
.c-time { width: 162px; }
input[type="checkbox"] { appearance: none; display: block; width: 21px; height: 21px; margin-top: 4px; border: 1px solid #d2d2d2; border-radius: 2px; background: #fff; }
input[type="checkbox"]:checked { background: #009095; }
.name div { display: flex; align-items: center; gap: 4px; }
.name span, .name a { flex: none; }
.line { height: 23px; line-height: 21px; padding: 0 6px; border: 1px solid #e6e6e6; border-radius: 2px; }
.badge { display: block; height: 21px; line-height: 20px; padding: 0 7px; border-radius: 2px; background: #ffb800; color: #fff; }
.badge.blue { background: #1e9fff; }
.badge.teal { background: #009095; }
.badge.one { width: 22px; text-align: center; }
.badge.tight { padding: 0 4px; }
.name .fill { flex: 1 0 auto; border-top-right-radius: 0; border-bottom-right-radius: 0; }
.ph { width: 50px; }
.ph2 { width: 57px; }
.acts { display: flex; gap: 4px; }
.acts button { height: 24px; line-height: 22px; padding: 0 7px; border: 1px solid #e6e6e6; border-radius: 2px; }

.sbar { flex: none; width: 17px; display: flex; flex-direction: column; align-items: center; background: #f1f1f1; }
.sa { flex: none; width: 8px; height: 4px; border: 4px solid transparent; margin: 7px 0 6px; }
.sa.up { border-top: 0; border-bottom-color: #555; }
.sa.down { border-bottom: 0; border-top-color: #333; margin-top: auto; }
.out .sa.up { border-bottom-color: #999; }
.thumb { width: 13px; background: #c4c4c4; }
.out .thumb { height: 94%; }
.in .thumb { height: 54%; margin-top: 53px; }

/* taskbar */
.taskbar { position: relative; flex: none; display: flex; height: 40px; gap: 4px; color: #fff; background: linear-gradient(to right, #31434f, #3a4d60 50%, #2c3b48); border-top: 1px solid #8796a2; }
.orb { width: 56px; display: grid; place-items: center; padding-right: 2px; }
.orb svg { width: 37px; height: 37px; }
.task { width: 58px; display: grid; place-items: center; border: 1px solid #aab3ba; border-radius: 3px; background: linear-gradient(135deg, #8f9aa3, #5a6670 50%, #707b85); box-shadow: 0 0 0 1px #1d2730; }
.task.cur { background: linear-gradient(135deg, #c2d9f0, #8fb9e2 50%, #dcecf8); border-color: #f2f8fd; }
.task svg { width: 33px; height: 33px; }
.tray { display: flex; align-items: center; gap: 8px; }
.clock { width: 76px; display: flex; flex-direction: column; align-items: center; font-size: 13px; line-height: 18px; }
.peek { width: 14px; height: 39px; margin-left: -8px; border: 1px solid #8996a0; background: linear-gradient(to bottom, #6b7a86, #2a3742); }
.cursor { position: absolute; left: 98px; top: 19px; width: 12px; height: 19px; }

/* floating screen recorder */
.recorder {
  position: absolute;
  right: 0;
  bottom: 41px;
  display: grid;
  grid-template-columns: 48px 28px 77px repeat(7, 28px);
  grid-template-rows: 28px 28px;
  gap: 1px;
  padding: 1px;
  background: #454545;
  color: #fff;
}
.recorder button { display: grid; place-items: center; background: linear-gradient(to bottom, #949494, #6e6e6e); }
.recorder button.lit { background: linear-gradient(to bottom, #e6e6e6, #b4b4b4); }
.recorder svg { width: 22px; height: 22px; }
.recorder .rec { grid-row: span 2; }
.rec i { width: 26px; height: 26px; background: #ee1c2e; box-shadow: 0 0 2px 1px #f3b9be; }
.recorder .cam { grid-column: 2; grid-row: 1; }
.recorder .pause { grid-column: 2; grid-row: 2; }
.timer { grid-column: 3; grid-row: 1 / span 2; display: grid; place-items: center; background: #000; color: #97dd92; font: 15px "Liberation Mono", monospace; }
.size { grid-column: 4 / span 4; display: grid; place-items: center; background: linear-gradient(to bottom, #949494, #7a7a7a); font-size: 13px; }
</style>
